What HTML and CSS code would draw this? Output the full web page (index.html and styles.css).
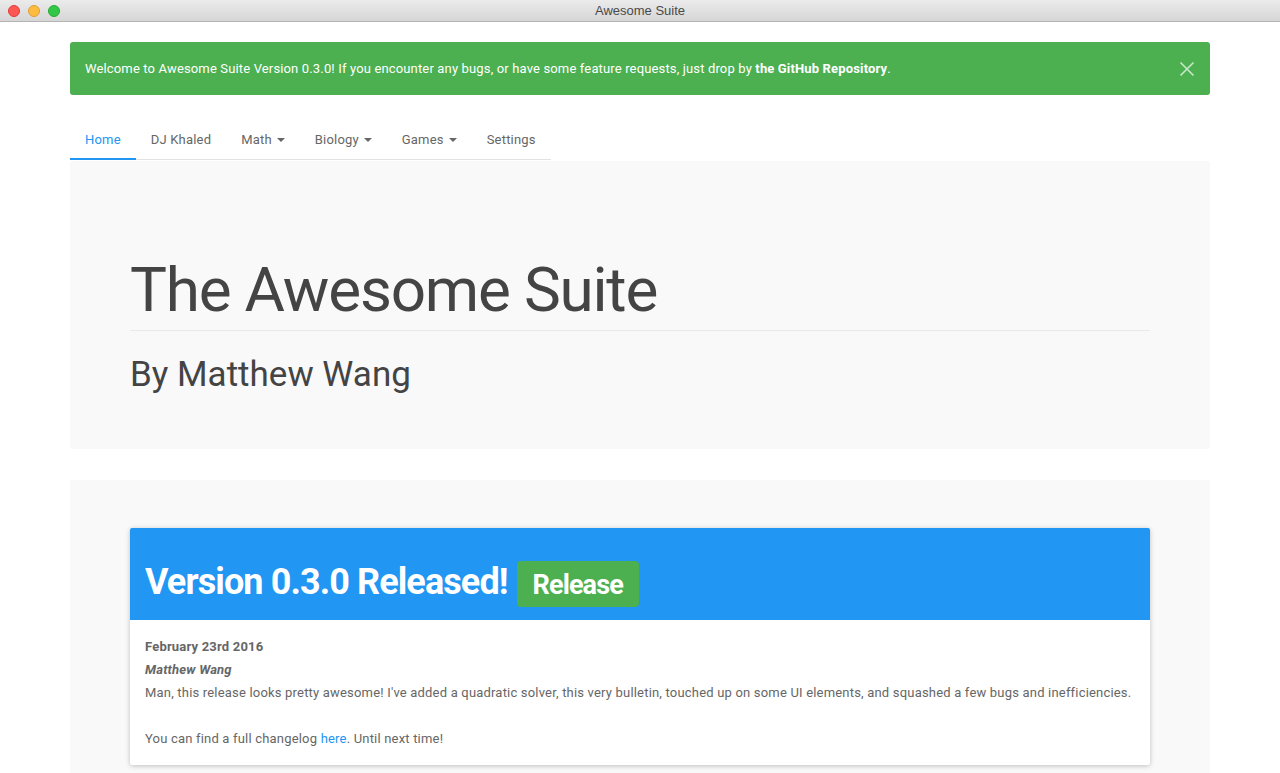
FILE: index.html
```html
<!DOCTYPE html>
<html>
<head>
<meta charset="utf-8">
<title>Awesome Suite</title>
<link rel="stylesheet" href="styles.css">
</head>
<body>
<div class="titlebar">
  <div class="lights">
    <span class="light red"></span>
    <span class="light yellow"></span>
    <span class="light green"></span>
  </div>
  <div class="wintitle">Awesome Suite</div>
</div>
<div class="page">
  <div class="container">
    <div class="alert">
      <span>Welcome to Awesome Suite Version 0.3.0! If you encounter any bugs, or have some feature requests, just drop by <b>the GitHub Repository</b>.</span>
      <svg class="close" width="16" height="16" viewBox="0 0 16 16"><path d="M1.5 1.5L14.5 14.5M14.5 1.5L1.5 14.5" stroke="rgba(255,255,255,0.7)" stroke-width="1.6" fill="none"/></svg>
    </div>
    <ul class="tabs">
      <li><a class="active">Home</a></li>
      <li><a>DJ Khaled</a></li>
      <li><a>Math<span class="caret"></span></a></li>
      <li><a>Biology<span class="caret"></span></a></li>
      <li><a>Games<span class="caret"></span></a></li>
      <li><a>Settings</a></li>
    </ul>
    <div class="jumbotron hero">
      <h1 class="main-title">The Awesome Suite</h1>
      <h2 class="subtitle">By Matthew Wang</h2>
    </div>
    <div class="jumbotron news">
      <div class="panel">
        <div class="panel-heading">
          <h1 class="panel-title">Version 0.3.0 Released!</h1>
          <span class="label">Release</span>
        </div>
        <div class="panel-body">
          <div class="date">February 23rd 2016</div>
          <div class="author">Matthew Wang</div>
          <p>Man, this release looks pretty awesome! I've added a quadratic solver, this very bulletin, touched up on some UI elements, and squashed a few bugs and inefficiencies.<br><br>You can find a full changelog <a class="link">here</a>. Until next time!</p>
        </div>
      </div>
    </div>
  </div>
</div>
</body>
</html>
```
FILE: styles.css
```css
html, body {
  margin: 0;
  padding: 0;
  background: #fff;
  overflow: hidden;
}
body {
  font-family: Roboto, "Liberation Sans", sans-serif;
  font-size: 13px;
  line-height: 23px;
  color: #666;
  letter-spacing: 0.19px;
}
.titlebar {
  height: 21px;
  background: linear-gradient(#ebebeb, #d6d6d6);
  border-bottom: 1px solid #b3b3b3;
  position: relative;
  display: flex;
  align-items: center;
  justify-content: center;
}
.lights {
  position: absolute;
  left: 8px;
  top: 5px;
  display: flex;
  gap: 8px;
}
.light {
  width: 12px;
  height: 12px;
  border-radius: 50%;
  box-sizing: border-box;
}
.red { background: #fc5753; border: 1px solid #df3d39; }
.yellow { background: #fdbc40; border: 1px solid #de9f34; }
.green { background: #33c748; border: 1px solid #27aa35; }
.wintitle {
  font-family: "Liberation Sans", "DejaVu Sans", sans-serif;
  font-size: 13px;
  color: #4a4a4a;
  line-height: 21px;
  letter-spacing: 0;
}
.page {
  padding-top: 20px;
}
.container {
  width: 1140px;
  margin: 0 auto;
}
.alert {
  background: #4caf50;
  color: #fff;
  border-radius: 3px;
  padding: 15px;
  display: flex;
  justify-content: space-between;
  align-items: center;
  letter-spacing: 0.15px;
}
.alert b { font-weight: 700; }
.close {
  margin-right: 0;
  display: block;
}
.tabs {
  list-style: none;
  margin: 23px 0 0;
  padding: 0;
  display: inline-flex;
  border-bottom: 1px solid #e2e2e2;
  vertical-align: top;
}
.tabs li { display: block; }
.tabs a {
  display: flex;
  align-items: center;
  padding: 10px 15px 8px;
  color: #666;
  line-height: 23px;
}
.tabs a.active {
  color: #2196f3;
  padding-bottom: 7px;
  border-bottom: 2px solid #2196f3;
  margin-bottom: -1px;
}
.caret {
  display: inline-block;
  width: 0;
  height: 0;
  border-top: 4px solid #666;
  border-left: 4px solid transparent;
  border-right: 4px solid transparent;
  margin-left: 5px;
  margin-top: 1px;
}
.jumbotron {
  background: #f9f9f9;
  border-radius: 2px;
}
.hero {
  margin-top: 1px;
  padding: 94px 60px 55px;
  color: #444;
}
.main-title {
  margin: 0;
  font-size: 62px;
  letter-spacing: -1.2px;
  line-height: 69px;
  font-weight: 400;
  padding-bottom: 6px;
  border-bottom: 1px solid #e9e9e9;
}
.subtitle {
  margin: 25px 0 0;
  font-size: 35px;
  line-height: 38px;
  font-weight: 400;
  letter-spacing: 0;
}
.news {
  margin-top: 31px;
  padding: 48px 60px 60px;
}
.panel {
  background: #fff;
  border-radius: 2px;
  box-shadow: 0 1px 6px rgba(0,0,0,0.12), 0 1px 4px rgba(0,0,0,0.12);
  overflow: hidden;
}
.panel-heading {
  background: #2196f3;
  color: #fff;
  padding: 33px 15px 13px;
  display: flex;
  align-items: baseline;
  gap: 9px;
}
.panel-title {
  margin: 0;
  font-size: 36px;
  letter-spacing: -0.9px;
  line-height: 40px;
  font-weight: 700;
}
.label {
  background: #4caf50;
  color: #fff;
  font-size: 27px;
  letter-spacing: -0.9px;
  line-height: 27px;
  font-weight: 700;
  padding: 11px 16px 8px;
  border-radius: 4px;
}
.panel-body {
  padding: 15px;
}
.date { font-weight: 700; }
.author { font-weight: 700; font-style: italic; }
.panel-body p { margin: 0; }
.link { color: #2196f3; }
```
